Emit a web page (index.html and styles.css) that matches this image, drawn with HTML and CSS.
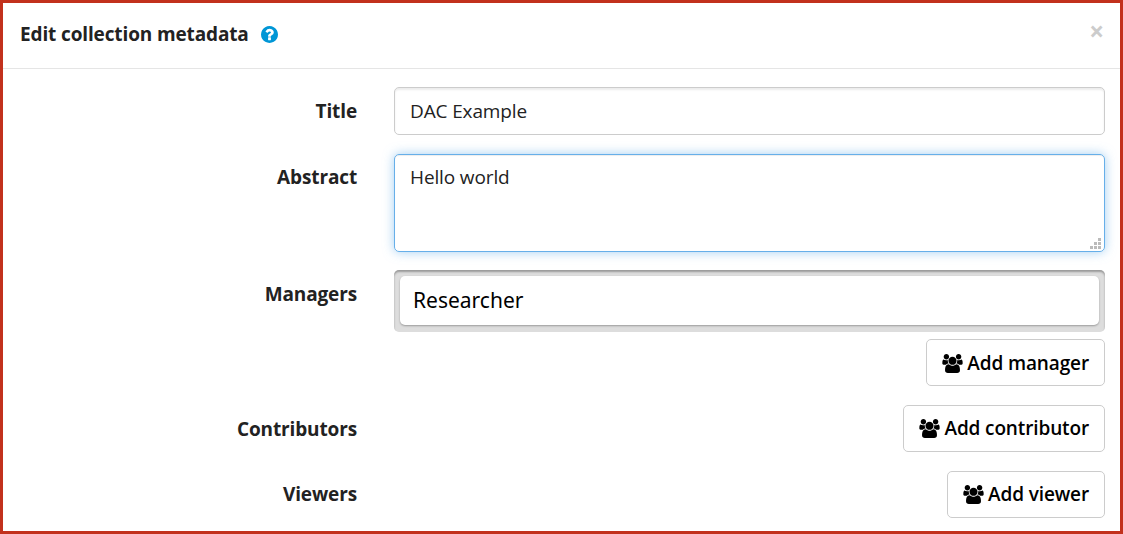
FILE: index.html
```
<!DOCTYPE html>
<html lang="en">
<head>
<meta charset="utf-8">
<title>Edit collection metadata</title>
<link rel="stylesheet" href="styles.css">
</head>
<body>
<svg class="defs" width="0" height="0" aria-hidden="true">
  <symbol id="users" viewBox="0 0 1920 1792"><path d="M593 896q-162 5-265 128h-134q-82 0-138-40.500t-56-118.500q0-353 124-353 6 0 43.500 21t97.500 42.500 119 21.500q67 0 133-23-5 37-5 66 0 139 81 256zM1664 1533q0 120-73 189.500t-194 69.500h-874q-121 0-194-69.500t-73-189.500q0-53 3.500-103.500t14-109 26.500-108.500 43-97.500 62-81 85.500-53.500 111.500-20q10 0 43 21.500t73 48 107 48 135 21.500 135-21.500 107-48 73-48 43-21.500q61 0 111.500 20t85.500 53.500 62 81 43 97.500 26.500 108.500 14 109 3.500 103.500zM640 256q0 106-75 181t-181 75-181-75-75-181 75-181 181-75 181 75 75 181zM1344 640q0 159-112.500 271.500t-271.500 112.500-271.500-112.500-112.500-271.500 112.500-271.500 271.500-112.500 271.500 112.500 112.500 271.500zM1920 865q0 78-56 118.500t-138 40.500h-134q-103-123-265-128 81-117 81-256 0-29-5-66 66 23 133 23 59 0 119-21.500t97.500-42.500 43.500-21q124 0 124 353zM1792 256q0 106-75 181t-181 75-181-75-75-181 75-181 181-75 181 75 75 181z"/></symbol>
</svg>
<div class="modal">
  <header class="modal-header">
    <h1 class="modal-title">Edit collection metadata</h1>
    <svg class="help" viewBox="128 128 1536 1536"><path d="M1024 1376v-192q0-14-9-23t-23-9h-192q-14 0-23 9t-9 23v192q0 14 9 23t23 9h192q14 0 23-9t9-23zm256-672q0-88-55.500-163t-138.500-116-170-41q-243 0-371 213-15 24 8 42l132 100q7 6 19 6 16 0 25-12 53-68 86-92 34-24 86-24 48 0 85.500 26t37.500 59q0 38-20 61t-68 45q-63 28-115.500 86.500t-52.500 125.500v36q0 14 9 23t23 9h192q14 0 23-9t9-23q0-19 21.500-49.500t54.500-49.500q32-18 49-28.500t46-35 44.500-48 28-60.500 12.500-81zm384 192q0 209-103 385.500t-279.500 279.500-385.500 103-385.500-103-279.500-279.500-103-385.500 103-385.500 279.500-279.500 385.500-103 385.500 103 279.500 279.500 103 385.500z"/></svg>
    <span class="close">×</span>
  </header>
  <main class="form">
    <div class="row row-title">
      <div class="label">Title</div>
      <div class="field input">DAC Example</div>
    </div>
    <div class="row row-abstract">
      <div class="label">Abstract</div>
      <div class="field textarea">Hello world
        <svg class="grip" viewBox="0 0 11 11"><path d="M8 0h3v3h-3zM8 4h3v3h-3zM4 4h3v3h-3zM0 8h3v3h-3zM4 8h3v3h-3zM8 8h3v3h-3z"/></svg>
      </div>
    </div>
    <div class="row row-managers">
      <div class="label">Managers</div>
      <div class="people">
        <div class="well"><div class="person">Researcher</div></div>
        <div class="btn"><svg class="users"><use href="#users"/></svg><span>Add manager</span></div>
      </div>
    </div>
    <div class="row row-contributors">
      <div class="label">Contributors</div>
      <div class="people"><div class="btn btn-raised"><svg class="users"><use href="#users"/></svg><span>Add contributor</span></div></div>
    </div>
    <div class="row row-viewers">
      <div class="label">Viewers</div>
      <div class="people"><div class="btn btn-raised"><svg class="users"><use href="#users"/></svg><span>Add viewer</span></div></div>
    </div>
  </main>
</div>
</body>
</html>
```
FILE: styles.css
```
* { box-sizing: border-box; }
body { margin: 0; font-family: "Open Sans", sans-serif; font-size: 19px; line-height: 26px; letter-spacing: -.13px; color: #222; background: #fff; }
.defs { position: absolute; }
.modal { height: 534px; border: 3px solid #c2311d; overflow: hidden; }
.modal-header { display: flex; height: 66px; padding: 0 16px 0 17px; border-bottom: 1px solid #e5e5e5; }
.modal-title { margin: 18px 0 0; font-size: 19px; line-height: 26px; font-weight: 700; }
.help { width: 17px; height: 17px; margin: 23px 0 0 12px; fill: #0096d6; }
.close { margin: 13px 0 0 auto; font-size: 26px; line-height: 30px; font-weight: 700; color: #ccc; }
.form { padding: 18px 15px 0 17px; }
.row { display: grid; grid-template-columns: 337px 711px; column-gap: 37px; }
.row-title, .row-contributors { margin-bottom: 19px; }
.row-abstract { margin-bottom: 18px; }
.row-managers { margin-bottom: 19px; }
.label { padding-top: 11px; text-align: right; font-weight: 700; }
.row-abstract .label, .row-viewers .label { padding-top: 10px; }
.field { border: 1px solid #ccc; border-radius: 5px; padding: 10px 15px; }
.input { height: 48px; box-shadow: inset 0 2px 2px rgba(0,0,0,.075); }
.textarea { position: relative; height: 98px; padding-top: 9px; border-color: #66afe9; box-shadow: inset 0 1px 1px rgba(0,0,0,.075), 0 0 11px rgba(102,175,233,.6); }
.grip { position: absolute; right: 3px; bottom: 2px; width: 11px; height: 11px; fill: #bbb; }
.people { display: flex; flex-direction: column; align-items: flex-end; }
.well { width: 711px; height: 62px; margin-bottom: 7px; padding: 6px 6px 7px 6px; border-radius: 5px; background: #ddd; box-shadow: inset 0 2px 2px rgba(0,0,0,.3); }
.person { height: 49px; padding: 11px 13px; border-radius: 5px; background: #fff; box-shadow: 0 1px 2px rgba(0,0,0,.3); font-family: "Noto Sans", sans-serif; font-size: 21px; letter-spacing: 0; color: #000; }
.btn { display: flex; height: 47px; padding: 10px 15px; border: 1px solid #ccc; border-radius: 5px; font-weight: 600; color: #000; white-space: nowrap; }
.btn-raised { padding-top: 9px; }
.users { width: 21px; height: 19px; margin: 4px 4px 0 0; }
```
